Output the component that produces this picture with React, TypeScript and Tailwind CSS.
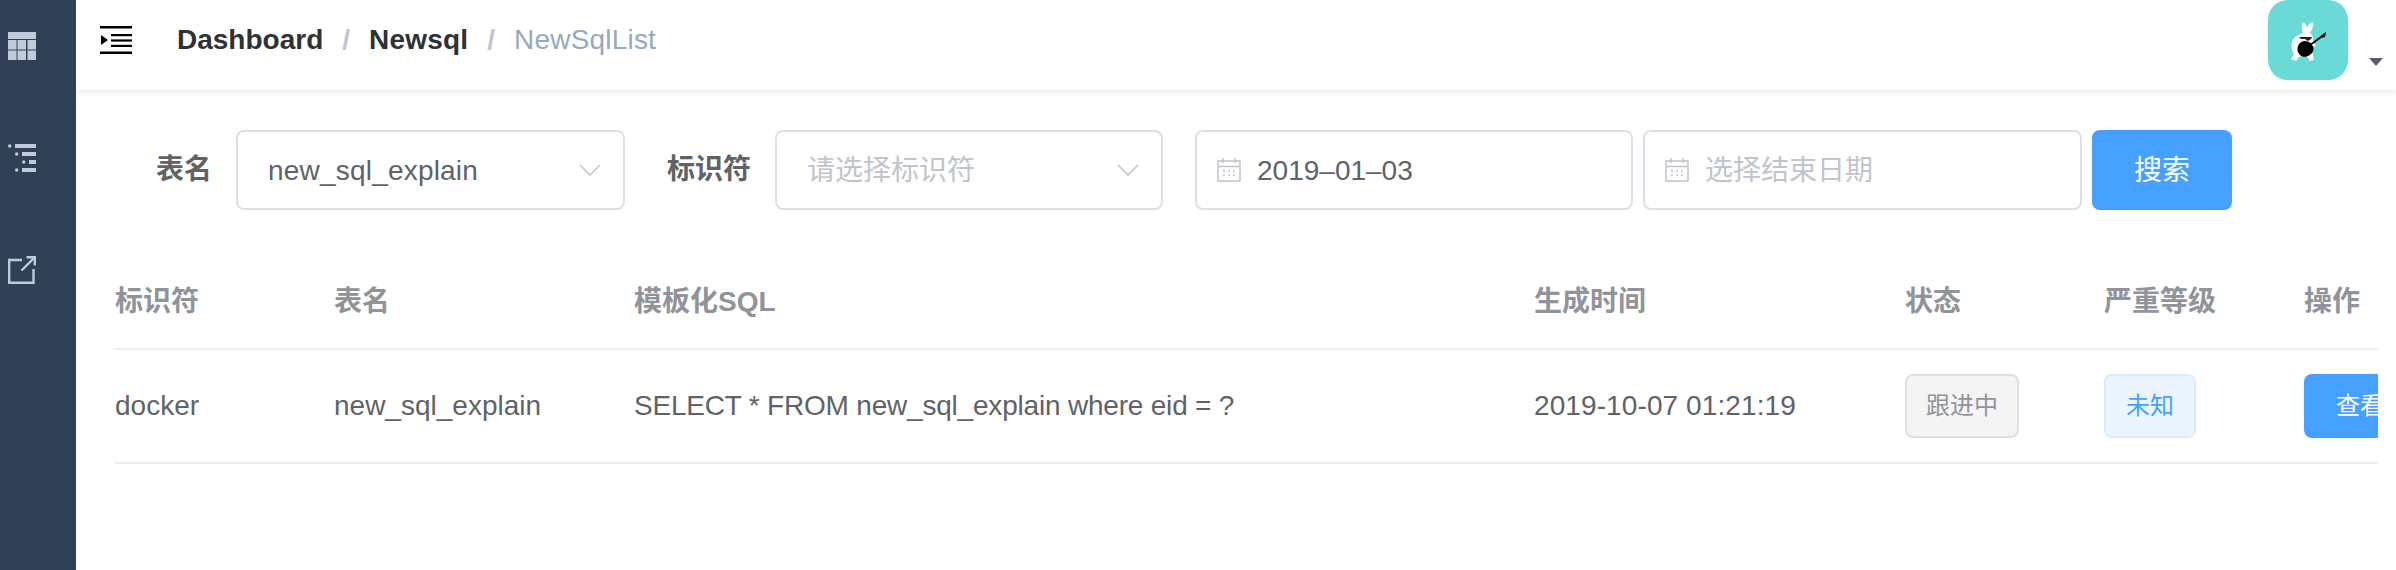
const TableIcon = () => (
  <svg width="28" height="28" viewBox="0 0 28 28" fill="#bfcbd9">
    <rect x="0" y="0" width="28" height="7" />
    <rect x="0" y="8" width="8.5" height="9.5" />
    <rect x="9.5" y="8" width="8.5" height="9.5" />
    <rect x="19.5" y="8" width="8.5" height="9.5" />
    <rect x="0" y="18.5" width="8.5" height="9.5" />
    <rect x="9.5" y="18.5" width="8.5" height="9.5" />
    <rect x="19.5" y="18.5" width="8.5" height="9.5" />
  </svg>
);

const TreeIcon = () => (
  <svg width="28" height="28" viewBox="0 0 28 28" fill="#bfcbd9">
    <circle cx="1.7" cy="2" r="1.7" />
    <rect x="7" y="0" width="21" height="4" />
    <circle cx="8.7" cy="10" r="1.7" />
    <rect x="14" y="8" width="14" height="4" />
    <circle cx="15.7" cy="18" r="1.7" />
    <rect x="21" y="16" width="7" height="4" />
    <circle cx="8.7" cy="26" r="1.7" />
    <rect x="14" y="24" width="14" height="4" />
  </svg>
);

const LinkIcon = () => (
  <svg width="28" height="28" viewBox="0 0 28 28" fill="none" stroke="#bfcbd9" strokeWidth="2.4">
    <path d="M14 4H1.2v22.8H25.5V13" />
    <path d="M13.5 14.5L26 2" />
    <path d="M18.5 1.2H26.8V9.5" />
  </svg>
);

const Hamburger = () => (
  <svg width="32" height="28" viewBox="0 0 32 28" fill="#000">
    <rect x="0" y="0" width="32" height="2.5" />
    <rect x="11" y="8" width="21" height="2.2" />
    <rect x="11" y="13.4" width="21" height="2.2" />
    <rect x="11" y="18.8" width="21" height="2.2" />
    <rect x="0" y="25.5" width="32" height="2.5" />
    <path d="M1 9L8 14L1 19Z" />
  </svg>
);

const Avatar = () => (
  <div className="w-20 h-20 rounded-[20px] bg-[#6adad6]">
    <svg width="80" height="80" viewBox="0 0 80 80">
      <path
        d="M35 33C34 28 33 24 35 22.500C37 22 38 25 39 28C40 25 42 22 45 22.500C46 25 44 30 42 33C46 36 46 42 44 50L46 60L42 61L38 55L31 57L28 61L23 59L26 54L24 50C22 42 26 35 35 33Z"
        fill="#fff"
      />
      <path d="M30 46C32 41 37 40 41 42C45 44 47 49 44 53C41 57 35 58 32 55C29 52 29 49 30 46Z" fill="#000" />
      <path d="M41 46L57 34" stroke="#000" strokeWidth="1.800" />
      <path d="M53 36L58 32L57 37L54 38Z" fill="#000" />
      <path d="M31 37H44L43 39L40 41L37 39H33Z" fill="#222" />
      <circle cx="46" cy="45" r="1.500" fill="#fff" />
    </svg>
  </div>
);

const Chevron = () => (
  <svg className="shrink-0" width="22" height="12" viewBox="0 0 22 12" fill="none" stroke="#c0c4cc" strokeWidth="1.500">
    <path d="M1 1L11 11L21 1" />
  </svg>
);

const CalendarIcon = () => (
  <svg className="shrink-0" width="24" height="24" viewBox="0 0 24 24" fill="none" stroke="#c0c4cc" strokeWidth="1.500">
    <rect x="1" y="3" width="22" height="20" />
    <path d="M1 8.500H23" />
    <path d="M6 0V5M18 0V5" />
    <path d="M6 13H8M11 13H13M16 13H18M6 17.500H8M11 17.500H13M16 17.500H18" />
  </svg>
);

const Select = ({ value, placeholder, width }: { value?: string; placeholder?: string; width: string }) => (
  <div className={`${width} h-20 shrink-0 pl-[30px] pr-[22px] flex items-center justify-between border-2 border-[#dcdfe6] rounded-lg`}>
    <span className={value ? "pt-[2px] tracking-[0.2px] text-[#606266]" : "pt-[2px] text-[#c0c4cc]"}>{value || placeholder}</span>
    <Chevron />
  </div>
);

const DateInput = ({ value, placeholder, width }: { value?: string; placeholder?: string; width: string }) => (
  <div className={`${width} h-20 shrink-0 pl-[20px] flex items-center gap-4 border-2 border-[#dcdfe6] rounded-lg`}>
    <CalendarIcon />
    <span className={value ? "pt-[2px] text-[#606266]" : "pt-[2px] text-[#c0c4cc]"}>{value || placeholder}</span>
  </div>
);

const App = () => {
  return (
    <div className="w-[2396px] h-[570px] flex overflow-hidden bg-white text-[28px] font-['Liberation_Sans','Noto_Sans_CJK_SC',sans-serif]">
      <aside className="w-[76px] shrink-0 bg-[#304156] pl-2 pt-8 flex flex-col gap-[84px]">
        <TableIcon />
        <TreeIcon />
        <LinkIcon />
      </aside>

      <main className="flex-1 min-w-0">
        <header className="h-[90px] flex items-start shadow-[0_2px_6px_rgba(0,21,41,0.1)]">
          <div className="pl-6 pt-[26px]">
            <Hamburger />
          </div>
          <nav className="ml-[45px] h-20 flex items-center font-bold text-[#303133]">
            <span>Dashboard</span>
            <span className="mx-[19px] text-[#c0c4cc]">/</span>
            <span className="tracking-[0.2px]">Newsql</span>
            <span className="mx-[19px] text-[#c0c4cc]">/</span>
            <span className="font-normal tracking-[0.2px] text-[#97a8be]">NewSqlList</span>
          </nav>
          <div className="ml-auto flex items-start pr-[13px]">
            <Avatar />
            <span className="ml-[21px] mt-[58px] w-0 h-0 border-x-[7px] border-x-transparent border-t-[8px] border-t-[#5a5e66]" />
          </div>
        </header>

        <form className="mt-10 pl-[80px] flex items-center">
          <label className="mr-6 font-bold text-[#606266]">表名</label>
          <Select value="new_sql_explain" width="w-[389px]" />
          <label className="ml-[42px] mr-6 font-bold text-[#606266]">标识符</label>
          <Select placeholder="请选择标识符" width="w-[388px]" />
          <div className="ml-8">
            <DateInput value="2019–01–03" width="w-[438px]" />
          </div>
          <div className="ml-[10px]">
            <DateInput placeholder="选择结束日期" width="w-[439px]" />
          </div>
          <button type="button" className="ml-[10px] w-[140px] h-20 shrink-0 rounded-lg bg-[#46a0ff] pt-[2px] text-white">
            搜索
          </button>
        </form>

        <div className="ml-[39px] mt-[45px] w-[2263px] overflow-hidden">
          <div className="h-[95px] flex items-center border-b-2 border-[#ebeef5] font-bold text-[#909399]">
            <div className="w-[219px] shrink-0">标识符</div>
            <div className="w-[300px] shrink-0">表名</div>
            <div className="w-[900px] shrink-0">模板化SQL</div>
            <div className="w-[371px] shrink-0">生成时间</div>
            <div className="w-[199px] shrink-0">状态</div>
            <div className="w-[200px] shrink-0">严重等级</div>
            <div className="w-[200px] shrink-0">操作</div>
          </div>
          <div className="h-[114px] flex items-center border-b-2 border-[#ebeef5] text-[#606266]">
            <div className="w-[219px] shrink-0">docker</div>
            <div className="w-[300px] shrink-0">new_sql_explain</div>
            <div className="w-[900px] shrink-0 tracking-[-0.2px]">SELECT * FROM new_sql_explain where eid = ?</div>
            <div className="w-[371px] shrink-0 tracking-[0.1px]">2019-10-07 01:21:19</div>
            <div className="w-[199px] shrink-0">
              <span className="inline-flex items-center h-16 px-[19px] rounded-lg border-2 border-[#dcdfe6] bg-[#f4f4f5] text-2xl text-[#909399]">
                跟进中
              </span>
            </div>
            <div className="w-[200px] shrink-0">
              <span className="inline-flex items-center h-16 px-5 rounded-lg border-2 border-[#d9ecff] bg-[#ecf5ff] text-2xl text-[#46a0ff]">
                未知
              </span>
            </div>
            <div className="w-[200px] shrink-0">
              <button type="button" className="h-16 px-8 rounded-lg bg-[#46a0ff] text-2xl text-white whitespace-nowrap">
                查看
              </button>
            </div>
          </div>
        </div>
      </main>
    </div>
  );
};

export default App;
